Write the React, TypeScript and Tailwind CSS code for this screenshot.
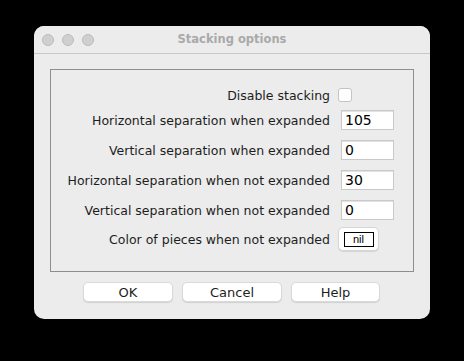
const font = { fontFamily: '"DejaVu Sans", "Liberation Sans", sans-serif' };

function Row({
  label,
  children,
  className = "",
}: {
  label: string;
  children: React.ReactNode;
  className?: string;
}) {
  return (
    <div className={`flex items-center ${className}`}>
      <div className="w-[280px] pr-[1px] pt-[2px] text-right text-[12.5px] text-[#1d1d1d]">{label}</div>
      <div className="ml-[7px] flex items-center">{children}</div>
    </div>
  );
}

function Field({ value }: { value: string }) {
  return (
    <div className="ml-[3px] flex h-[20px] w-[53px] items-center border border-[#c9c9c9] bg-white pl-[3px] text-[14px] text-black shadow-[inset_0_1px_0_#e2e2e2]">
      {value}
    </div>
  );
}

function Btn({ label, w }: { label: string; w: string }) {
  return (
    <button
      className={`${w} h-[20px] rounded-[5px] border border-[#dadada] bg-white text-[13px] text-[#1d1d1d] shadow-[0_1px_1px_rgba(0,0,0,0.12)]`}
    >
      {label}
    </button>
  );
}

export default function App() {
  return (
    <div className="h-[361px] w-[464px] bg-black pl-[34px] pt-[26px]" style={font}>
      <div className="h-[293px] w-[396px] overflow-hidden rounded-[10px] bg-[#ececec]">
        <div className="relative flex h-[28px] items-center justify-center border-b border-[#c8c8c8] bg-[#ececec]">
          <div className="absolute left-[8px] top-[8px] flex gap-[8px]">
            <span className="h-[12px] w-[12px] rounded-full border border-[#bcbcbc] bg-[#cfcfcf]" />
            <span className="h-[12px] w-[12px] rounded-full border border-[#bcbcbc] bg-[#cfcfcf]" />
            <span className="h-[12px] w-[12px] rounded-full border border-[#bcbcbc] bg-[#cfcfcf]" />
          </div>
          <span className="text-[11.5px] font-bold text-[#a9a9a9]">Stacking options</span>
        </div>

        <div className="mx-[16px] mt-[15px] h-[203px] border border-[#8e8e8e] pt-[18px]">
          <Row label="Disable stacking" className="h-[14px]">
            <span className="h-[14px] w-[14px] rounded-[3px] border border-[#c4c4c4] bg-white" />
          </Row>
          <Row label="Horizontal separation when expanded" className="mt-[8px] h-[20px]">
            <Field value="105" />
          </Row>
          <Row label="Vertical separation when expanded" className="mt-[10px] h-[20px]">
            <Field value="0" />
          </Row>
          <Row label="Horizontal separation when not expanded" className="mt-[10px] h-[20px]">
            <Field value="30" />
          </Row>
          <Row label="Vertical separation when not expanded" className="mt-[10px] h-[20px]">
            <Field value="0" />
          </Row>
          <Row label="Color of pieces when not expanded" className="mt-[7px] h-[24px]">
            <div className="flex h-[24px] w-[41px] items-center justify-center rounded-[5px] border border-[#d6d6d6] bg-white shadow-[0_1px_1px_rgba(0,0,0,0.1)]">
              <div
                className="flex h-[15px] w-[30px] items-center justify-center border border-black text-[11px] leading-none text-black"
                style={{ fontFamily: '"Liberation Sans", sans-serif' }}
              >
                nil
              </div>
            </div>
          </Row>
        </div>

        <div className="ml-[49px] mt-[10px] flex gap-[9px]">
          <Btn label="OK" w="w-[90px]" />
          <Btn label="Cancel" w="w-[100px]" />
          <Btn label="Help" w="w-[89px]" />
        </div>
      </div>
    </div>
  );
}
